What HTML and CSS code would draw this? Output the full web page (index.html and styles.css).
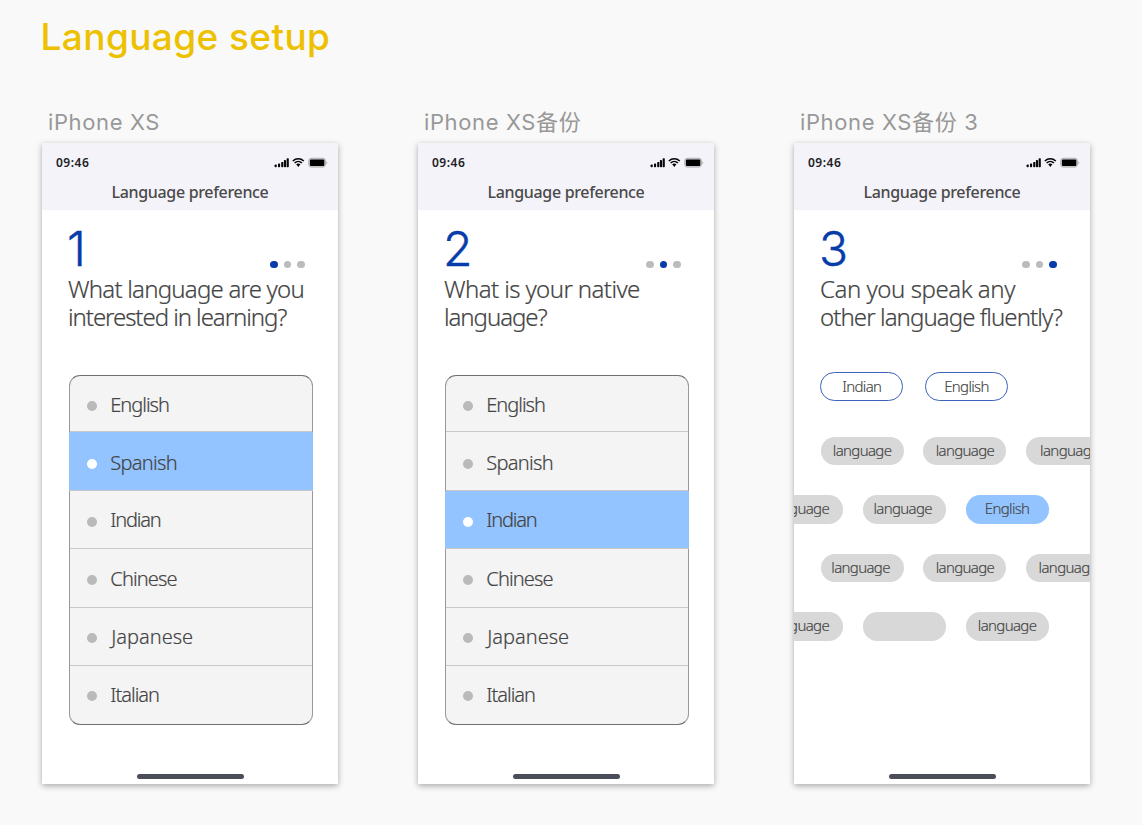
FILE: index.html
```
<!DOCTYPE html>
<html lang="en">
<head>
<meta charset="utf-8">
<title>Language setup</title>
<link rel="stylesheet" href="styles.css">
</head>
<body>
<svg class="defs" width="0" height="0" aria-hidden="true">
  <symbol id="status" viewBox="0 0 54 12">
    <g fill="#050506">
      <rect x="0.6" y="7.6" width="2.1" height="2.6" rx=".7"/>
      <rect x="4" y="6.4" width="2.1" height="3.8" rx=".7"/>
      <rect x="7.2" y="4.900" width="2.1" height="5.300" rx=".7"/>
      <rect x="9.900" y="3" width="2.1" height="7.200" rx=".7"/>
      <rect x="12.600" y="1.300" width="2.200" height="8.900" rx=".7"/>
      <path d="M22.200 7.300c1.200-1 3-1 4.200 0l-2.100 2.700z"/>
    </g>
    <path d="M18.800 4c3.200-3 7.800-3 11 0M20.600 6c2.100-2 5.300-2 7.400 0" fill="none" stroke="#050506" stroke-width="1.500"/>
    <rect x="34.800" y="1.300" width="16.600" height="8.800" rx="2.400" fill="#d2d1d6" stroke="#b1b0b5" stroke-width="1"/>
    <path d="M52.400 4c1.100.5 1.100 2.900 0 3.400z" fill="#a5a4a9"/>
    <rect x="35.900" y="2.500" width="14.400" height="6.500" rx="1.100" fill="#000"/>
  </symbol>
</svg>
<h1 class="title">Language setup</h1>
<main class="boards">
  <section class="board">
    <h2 class="label">iPhone XS</h2>
    <div class="phone">
      <header class="bar">
        <div class="status"><span>09:46</span><svg class="icons"><use href="#status"/></svg></div>
        <div class="heading">Language preference</div>
      </header>
      <div class="step"><span class="num">1</span><span class="pager first"><i class="on"></i><i></i><i></i></span></div>
      <p class="question"><span class="snug">What language are you</span><span class="tight">interested in learning?</span></p>
      <ul class="list">
        <li>English</li><li class="selected">Spanish</li><li>Indian</li><li>Chinese</li><li>Japanese</li><li>Italian</li>
      </ul>
      <div class="home"></div>
    </div>
  </section>
  <section class="board">
    <h2 class="label">iPhone XS备份</h2>
    <div class="phone">
      <header class="bar">
        <div class="status"><span>09:46</span><svg class="icons"><use href="#status"/></svg></div>
        <div class="heading">Language preference</div>
      </header>
      <div class="step"><span class="num">2</span><span class="pager"><i></i><i class="on"></i><i></i></span></div>
      <p class="question"><span>What is your native</span><span class="tight">language?</span></p>
      <ul class="list">
        <li>English</li><li>Spanish</li><li class="selected">Indian</li><li>Chinese</li><li>Japanese</li><li>Italian</li>
      </ul>
      <div class="home"></div>
    </div>
  </section>
  <section class="board">
    <h2 class="label">iPhone XS备份 3</h2>
    <div class="phone">
      <header class="bar">
        <div class="status"><span>09:46</span><svg class="icons"><use href="#status"/></svg></div>
        <div class="heading">Language preference</div>
      </header>
      <div class="step"><span class="num">3</span><span class="pager"><i></i><i></i><i class="on"></i></span></div>
      <p class="question"><span class="loose">Can you speak any</span><span class="close">other language fluently?</span></p>
      <div class="chips">
        <div class="row picked"><span class="chip outline">Indian</span><span class="chip outline">English</span></div>
        <div class="row"><span class="chip">language</span><span class="chip">language</span><span class="chip nudge">language</span></div>
        <div class="row shifted"><span class="chip back">language</span><span class="chip back">language</span><span class="chip active">English</span></div>
        <div class="row"><span class="chip back">language</span><span class="chip">language</span><span class="chip">language</span></div>
        <div class="row shifted"><span class="chip back">language</span><span class="chip"></span><span class="chip">language</span></div>
      </div>
      <div class="home"></div>
    </div>
  </section>
</main>
</body>
</html>
```
FILE: styles.css
```
* { box-sizing: border-box; }
body {
  margin: 0;
  width: 1142px;
  height: 825px;
  overflow: hidden;
  background: #f9f9f9;
  color: #444;
  font-family: "Noto Sans", "Noto Sans CJK SC", sans-serif;
}
.defs { display: block; }
.title {
  margin: 0;
  padding: 14px 0 0 40.500px;
  height: 104px;
  font: 500 37px/46px Inter, sans-serif;
  letter-spacing: 0.400px;
  color: #edc100;
}
.boards { display: flex; gap: 80px; padding-left: 42px; }
.board { width: 296px; }
.label {
  margin: 0;
  padding-left: 6px;
  height: 39px;
  font: 400 22px/36px Inter, "Noto Sans CJK SC", sans-serif;
  letter-spacing: 0.620px;
  color: #989898;
  white-space: nowrap;
}
.phone {
  display: flex;
  flex-direction: column;
  width: 296px;
  height: 641px;
  background: #fff;
  box-shadow: 0 2px 6px rgba(0, 0, 0, .32);
}
.bar { height: 67px; background: #f4f3f9; }
.status {
  display: flex;
  justify-content: space-between;
  height: 36px;
  padding: 11px 10px 0 14px;
  font: 600 12px/18px "Noto Sans", sans-serif;
  letter-spacing: 0.500px;
  color: #222226;
}
.icons { width: 54px; height: 12px; margin-top: 3px; }
.heading {
  font: 500 16px/27px "Noto Sans", sans-serif;
  letter-spacing: -.33px;
  text-align: center;
  color: #4a4a4a;
}
.step {
  display: flex;
  justify-content: space-between;
  align-items: flex-start;
  height: 64px;
  padding: 9px 33.500px 0 25px;
}
.num {
  font: 300 48px/60px Inter, sans-serif;
  color: #083caa;
  -webkit-text-stroke: .4px #083caa;
}
.pager { display: flex; gap: 6px; padding-top: 42px; }
.pager i { width: 7.400px; height: 7.400px; border-radius: 50%; background: #bcbcbc; }
.pager i.on { background: #083caa; }
.question {
  margin: 0;
  padding: 1px 0 0 26px;
  height: 101px;
  font-size: 24px;
  font-weight: 300;
  line-height: 28px;
  letter-spacing: -.6px;
  white-space: nowrap;
  -webkit-text-stroke: .2px #444;
}
.question span { display: block; }
.question .snug { letter-spacing: -.78px; }
.question .tight { letter-spacing: -1.060px; }
.question .close { letter-spacing: -.93px; }
.question .loose { letter-spacing: -.45px; }
.list {
  display: grid;
  grid-template-rows: 56px 59px 58px 59px 58px 58px;
  width: 244px;
  height: 350px;
  margin: 0 0 0 26.600px;
  padding: 0;
  list-style: none;
  background: #f4f4f4;
  border: 1px solid #707070;
  border-left-color: #999;
  border-right-color: #999;
  border-radius: 11px;
}
.list li {
  display: flex;
  align-items: center;
  padding-left: 17.200px;
  border-bottom: 1px solid #c8c8c8;
  font-size: 20px;
  font-weight: 300;
  letter-spacing: -1px;
  -webkit-text-stroke: .2px #444;
}
.list li::before {
  content: "";
  width: 10px;
  height: 10px;
  margin: 4px 13.500px 0 0;
  border-radius: 50%;
  background: #bababa;
}
.list li:nth-child(1) { padding-top: 1px; }
.list li:nth-child(2) { padding-top: 2px; letter-spacing: -.7px; }
.list li:nth-child(3) { letter-spacing: -1.200px; }
.list li:nth-child(4) { letter-spacing: -.85px; }
.list li:nth-child(5) { letter-spacing: 0; }
.list li:nth-child(5)::before { margin: 2px 14.500px 0 0; }
.list li:nth-child(6) { padding-bottom: 2px; border-bottom: 0; }
.list li:nth-child(6)::before { margin-top: 3px; }
.list li.selected { margin: 0 -1px; padding-left: 18.200px; background: #94c4ff; }
.list li.selected::before { background: #fff; }
.chips { overflow: hidden; padding-top: 1px; margin-top: -4px; }
.row { display: flex; gap: 19.900px; height: 58.600px; padding-left: 26.600px; }
.row.picked { height: 64.700px; gap: 21.700px; padding-left: 26.300px; }
.row.shifted { padding-left: 0; margin-left: -34.200px; }
.chip {
  flex: none;
  width: 83px;
  height: 28.500px;
  border-radius: 14.300px;
  background: #d8d8d8;
  font-size: 15px;
  font-weight: 300;
  line-height: 27px;
  letter-spacing: -.65px;
  text-align: center;
  -webkit-text-stroke: .15px #444;
}
.chip.nudge { padding-left: 3px; }
.chip.back { padding-right: 3px; }
.chip.outline { background: #fff; border: 1px solid #3b63bb; line-height: 26px; }
.chip.active { background: #94c4ff; }
.home {
  width: 107px;
  height: 5px;
  margin: auto auto 5px;
  border-radius: 3px;
  background: #4b4d59;
}
```
